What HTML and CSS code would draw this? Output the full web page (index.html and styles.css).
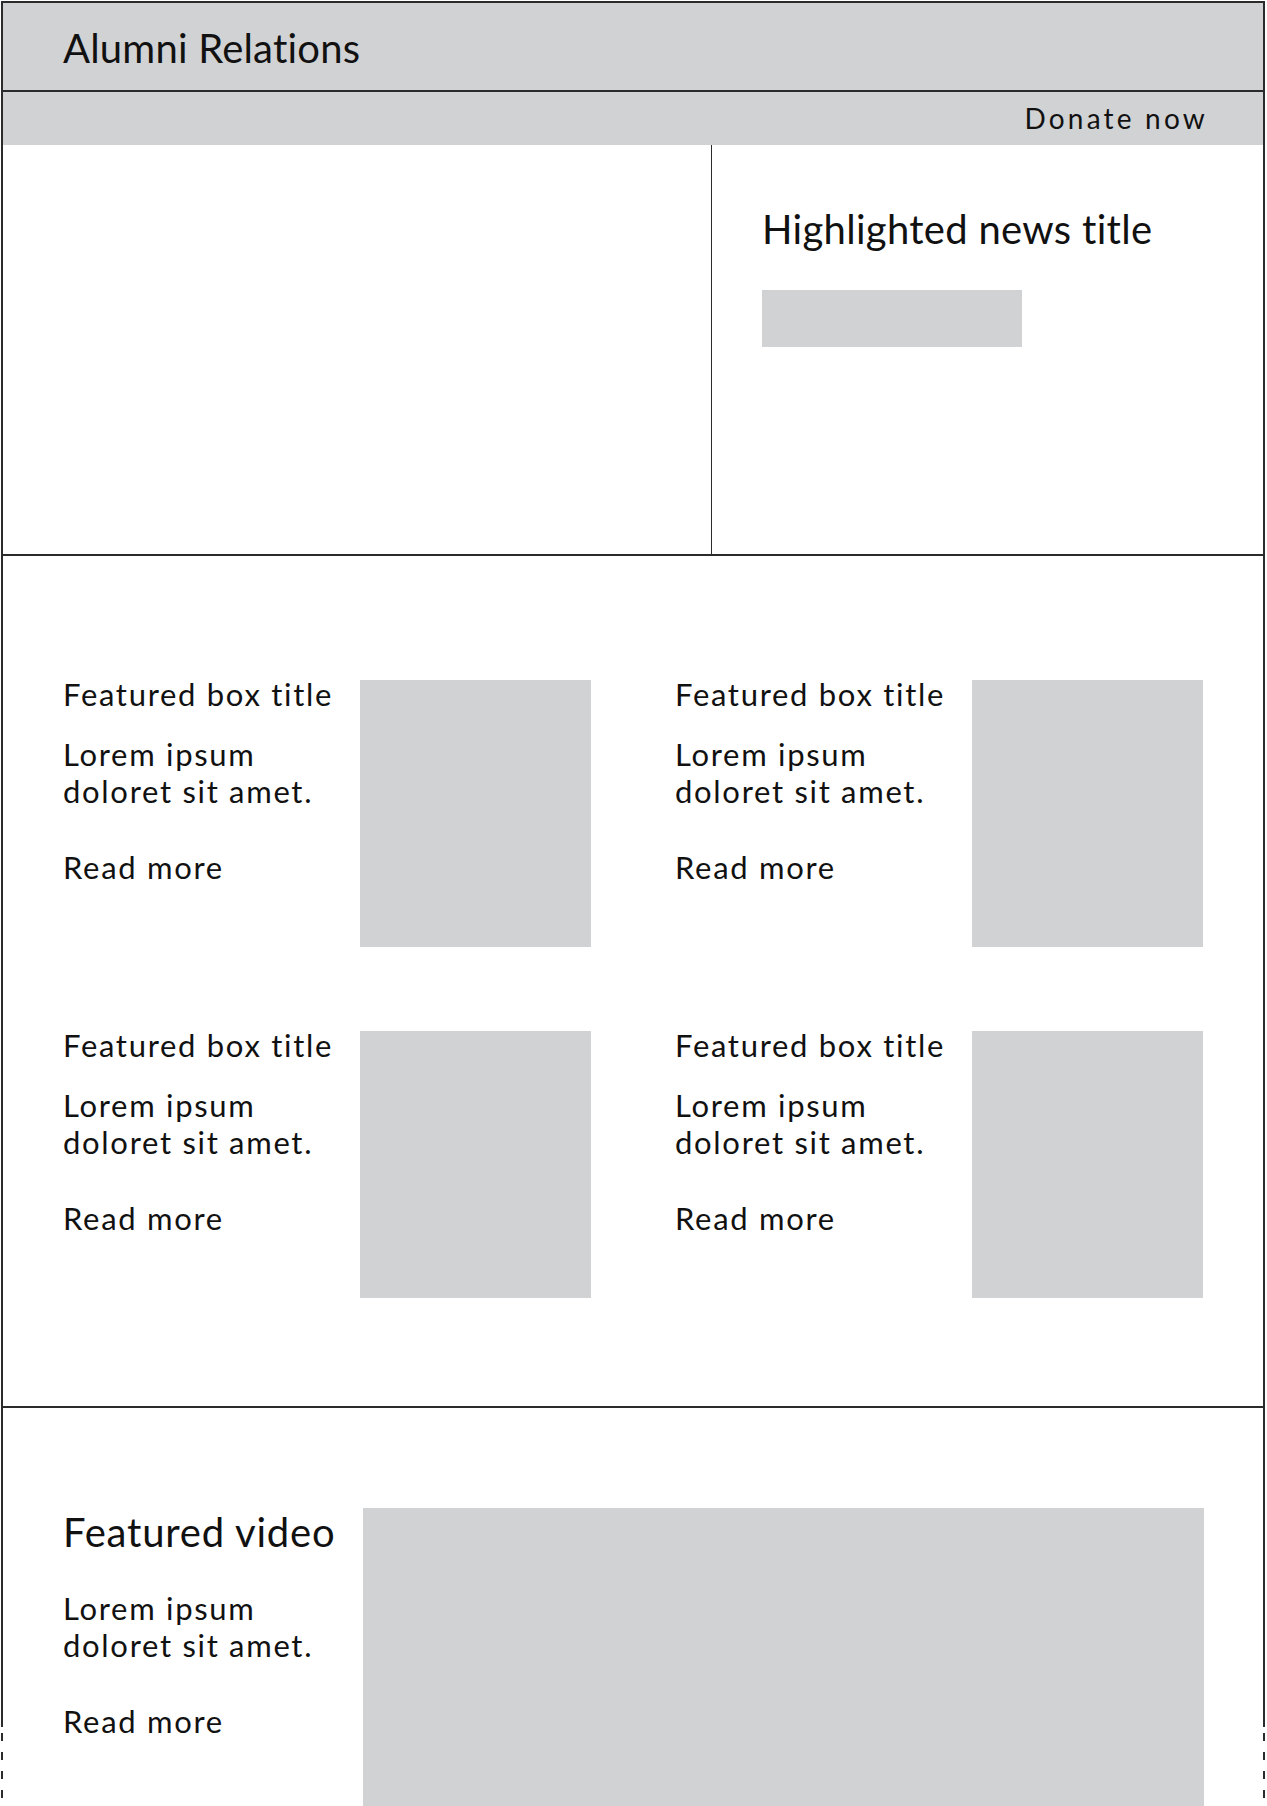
FILE: index.html
```html
<!DOCTYPE html>
<html lang="en">
<head>
  <meta charset="UTF-8" />
  <meta name="viewport" content="width=device-width, initial-scale=1.0" />
  <title>Alumni Relations</title>
  <link rel="stylesheet" href="styles.css">
</head>
<body>
  <div class="page">
    <header class="masthead">
      <h1>Alumni Relations</h1>
    </header>
    <nav class="topnav">
      <a href="#">Donate now</a>
    </nav>
    <section class="hero">
      <div class="hero-media"></div>
      <div class="hero-news">
        <h2>Highlighted news title</h2>
        <div class="btn-placeholder"></div>
      </div>
    </section>
    <section class="featured">
      <div class="card">
        <div class="card-text">
          <h3>Featured box title</h3>
          <p>Lorem ipsum<br>doloret sit amet.</p>
          <a href="#">Read more</a>
        </div>
        <div class="card-img"></div>
      </div>
      <div class="card">
        <div class="card-text">
          <h3>Featured box title</h3>
          <p>Lorem ipsum<br>doloret sit amet.</p>
          <a href="#">Read more</a>
        </div>
        <div class="card-img"></div>
      </div>
      <div class="card">
        <div class="card-text">
          <h3>Featured box title</h3>
          <p>Lorem ipsum<br>doloret sit amet.</p>
          <a href="#">Read more</a>
        </div>
        <div class="card-img"></div>
      </div>
      <div class="card">
        <div class="card-text">
          <h3>Featured box title</h3>
          <p>Lorem ipsum<br>doloret sit amet.</p>
          <a href="#">Read more</a>
        </div>
        <div class="card-img"></div>
      </div>
    </section>
    <section class="video">
      <div class="video-text">
        <h2>Featured video</h2>
        <p>Lorem ipsum<br>doloret sit amet.</p>
        <a href="#">Read more</a>
      </div>
      <div class="video-frame"></div>
    </section>
  </div>
</body>
</html>
```

FILE: styles.css
```css
body {
  margin: 0;
  font-family: Lato, "Liberation Sans", sans-serif;
  color: #111;
  background: #fff;
}
a { color: #111; text-decoration: none; }
h1, h2, h3, p { margin: 0; font-weight: normal; }

.page {
  margin: 1px 2px 0 1px;
  border-top: 2px solid #2b2b2b;
  height: 1805px;
  overflow: hidden;
}
.masthead, .topnav, .hero, .featured {
  border-left: 2px solid #2b2b2b;
  border-right: 2px solid #2b2b2b;
}

.masthead {
  background: #d1d2d4;
  height: 89px;
  padding: 23px 0 0 60px;
  box-sizing: border-box;
  border-bottom: 2px solid #2b2b2b;
}
.masthead h1 { font-size: 40px; line-height: 44px; letter-spacing: 0.2px; }

.topnav {
  background: #d1d2d4;
  height: 53px;
  display: flex;
  justify-content: flex-end;
  padding-right: 55px;
}
.topnav a { font-size: 28px; line-height: 52px; letter-spacing: 3.2px; }

.hero {
  display: flex;
  height: 409px;
  border-bottom: 2px solid #2b2b2b;
}
.hero-media { width: 708px; border-right: 1px solid #2b2b2b; }
.hero-news { flex: 1; padding: 62px 0 0 50px; }
.hero-news h2 { font-size: 40px; line-height: 44px; letter-spacing: 0.3px; margin-bottom: 39px; }
.btn-placeholder { width: 260px; height: 57px; background: #d1d2d4; }

.featured {
  display: grid;
  grid-template-columns: 528px 528px;
  column-gap: 84px;
  row-gap: 84px;
  padding: 124px 59px 108px 60px;
  border-bottom: 2px solid #2b2b2b;
}
.card { display: flex; }
.card-text { flex: 1; }
.card-img { width: 231px; height: 267px; background: #d1d2d4; }

.card-text h3, .card-text p, .card-text a,
.video-text p, .video-text a {
  font-size: 31px;
  letter-spacing: 1.7px;
}
.card-text h3 { line-height: 30px; margin: -1px 0 27px; }
.card-text p, .video-text p { line-height: 37px; margin-bottom: 39px; }
.card-text a, .video-text a { display: block; line-height: 37px; }

.video {
  display: flex;
  padding: 100px 61px 0 62px;
  height: 398px;
  box-sizing: border-box;
  background:
    linear-gradient(#2b2b2b, #2b2b2b) left top / 2px 319px no-repeat,
    linear-gradient(#2b2b2b, #2b2b2b) right top / 2px 319px no-repeat,
    repeating-linear-gradient(to bottom, transparent 0 6px, #2b2b2b 6px 14px, transparent 14px 19px) left bottom / 2px 79px no-repeat,
    repeating-linear-gradient(to bottom, transparent 0 6px, #2b2b2b 6px 14px, transparent 14px 19px) right bottom / 2px 79px no-repeat;
}
.video-text { width: 300px; flex: none; }
.video-text h2 { font-size: 40px; line-height: 44px; letter-spacing: 0.8px; margin: 2px 0 36px; }
.video-frame { flex: 1; background: #d1d2d4; }
```
